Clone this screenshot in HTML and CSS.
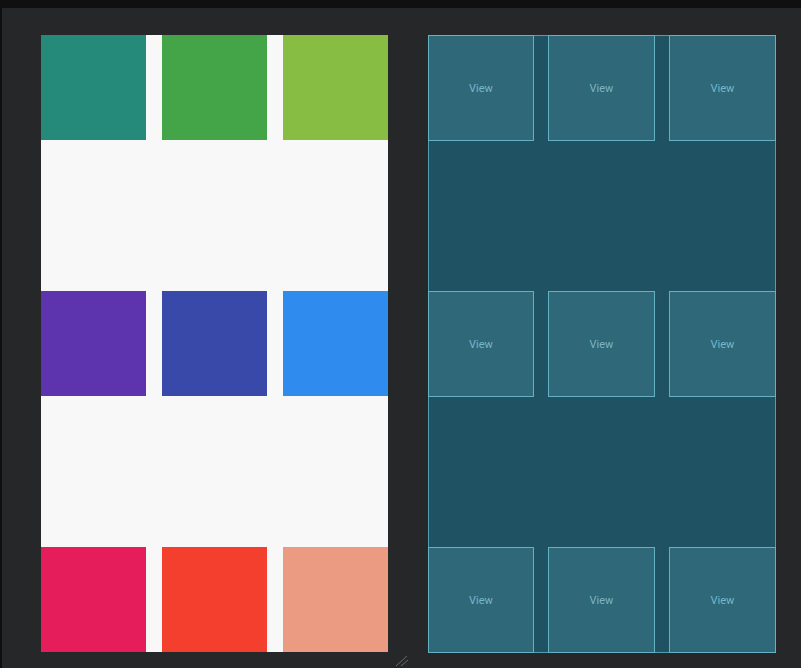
FILE: index.html
```html
<!DOCTYPE html>
<html>
<head>
<meta charset="utf-8">
<link rel="stylesheet" href="styles.css">
</head>
<body>
<div class="topbar"></div>
<div class="workspace">
  <div class="canvas">
    <div class="phone design">
      <div class="box c1"></div><div class="box c2"></div><div class="box c3"></div>
      <div class="spacer"></div>
      <div class="box c4"></div><div class="box c5"></div><div class="box c6"></div>
      <div class="spacer"></div>
      <div class="box c7"></div><div class="box c8"></div><div class="box c9"></div>
    </div>
    <div class="phone blueprint">
      <div class="vbox">View</div><div class="vbox">View</div><div class="vbox">View</div>
      <div class="spacer"></div>
      <div class="vbox">View</div><div class="vbox">View</div><div class="vbox">View</div>
      <div class="spacer"></div>
      <div class="vbox">View</div><div class="vbox">View</div><div class="vbox">View</div>
    </div>
    <svg class="handle" width="16" height="14" viewBox="0 0 16 14"><path d="M2 13 L13 3 M7 13 L14 7" stroke="#6a6b6d" stroke-width="1" fill="none"/></svg>
  </div>
</div>
</body>
</html>
```

FILE: styles.css
```css
html, body {
  margin: 0;
  padding: 0;
  height: 100%;
  overflow: hidden;
  background: #262729;
  font-family: "Roboto", "Liberation Sans", sans-serif;
}
.topbar {
  height: 8px;
  background: #101010;
}
.workspace {
  border-left: 2px solid #0f0f0f;
  height: 660px;
  box-sizing: border-box;
}
.canvas {
  position: relative;
  display: flex;
  gap: 40px;
  padding: 27px 0 0 39px;
}
.phone {
  width: 347px;
  height: 617px;
  display: grid;
  grid-template-columns: 105px 105px 105px;
  grid-template-rows: 105px 1fr 105px 1fr 105px;
  column-gap: 16px;
  box-sizing: border-box;
}
.spacer {
  grid-column: 1 / 4;
}
.design {
  background: #f8f8f8;
}
.c1 { background: #268a7b; }
.c2 { background: #43a548; }
.c3 { background: #86bd42; }
.c4 { background: #5d34ae; }
.c5 { background: #3949a9; }
.c6 { background: #2f8cee; }
.c7 { background: #e61d5b; }
.c8 { background: #f43f2e; }
.c9 { background: #eb9b82; }
.blueprint {
  background: #1f5262;
  box-shadow: inset 0 0 0 1px #4f9fb0;
  height: 618px;
  width: 348px;
  grid-template-rows: 106px 1fr 106px 1fr 106px;
  grid-template-columns: 106px 107px 107px;
  column-gap: 14px;
}
.vbox {
  background: #2f6878;
  border: 1px solid #63b1c2;
  display: flex;
  align-items: center;
  justify-content: center;
  color: #79b7c6;
  font-size: 11px;
}
.handle {
  position: absolute;
  left: 392px;
  top: 645px;
}
```
